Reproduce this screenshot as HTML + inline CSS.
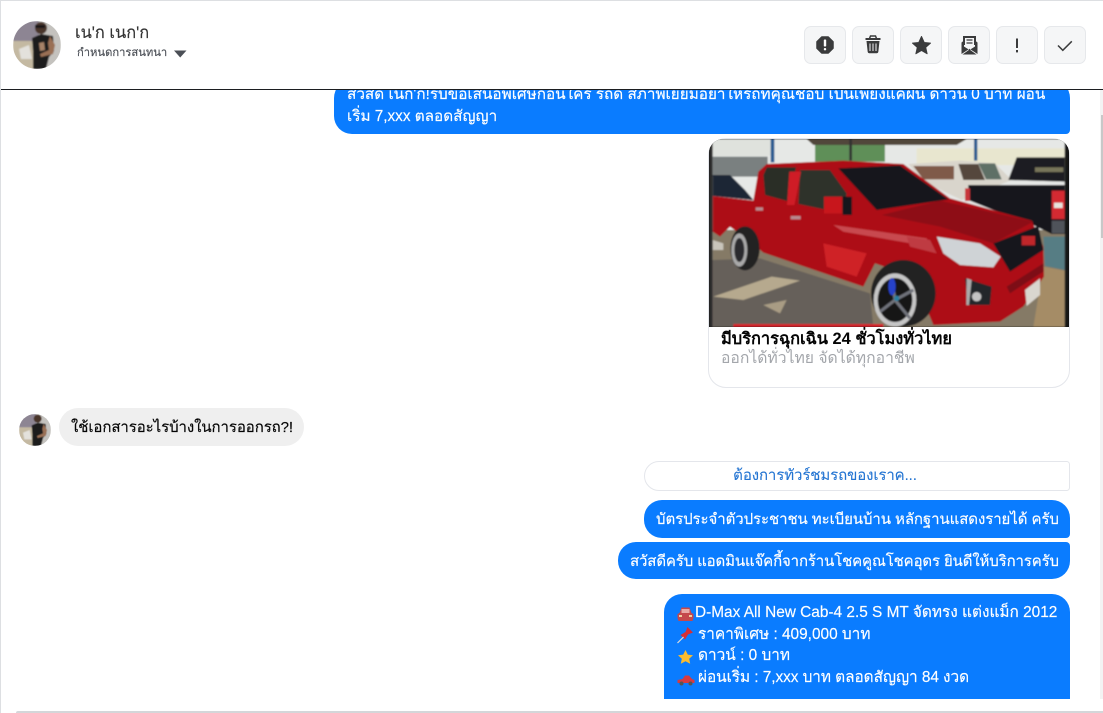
<!DOCTYPE html>
<html lang="th"><head><meta charset="utf-8"><title>Chat</title>
<style>
html,body{margin:0;padding:0;background:#fff}
body{width:1103px;height:713px;position:relative;overflow:hidden;font-family:"Liberation Sans","Noto Sans CJK SC",sans-serif;color:#050505}
.a{position:absolute}
.b{position:absolute;background:#0a7cff;color:#fff;font-size:15px;line-height:21px;white-space:nowrap;box-sizing:border-box;-webkit-text-stroke:.15px currentColor}
.btn{position:absolute;top:26px;width:42px;height:38px;box-sizing:border-box;background:#f5f6f7;border:1px solid #e6e8eb;border-radius:7px}
.btn svg{position:absolute;left:0;top:0}
</style></head><body>
<div class="a" style="left:0;top:0;width:1103px;height:1px;background:#dddfe2"></div>
<svg class="a" style="left:13px;top:21px" width="48" height="48" viewBox="0 0 48 48"><defs><clipPath id="c1"><circle cx="24" cy="24" r="24"/></clipPath><filter id="fa"><feGaussianBlur stdDeviation=".7"/></filter></defs><g clip-path="url(#c1)"><g filter="url(#fa)"><rect width="48" height="48" fill="#b9b6b2"/><rect width="26" height="20" fill="#8d8593"/><rect x="26" width="22" height="48" fill="#c4c2be"/><path d="M0 20H20L22 48H0Z" fill="#c4b9a2"/><path d="M6 28l10-4 3 14H8z" fill="#e3e1dc"/><path d="M19 17 L28 13 L40 15 L41 30 L36 36 L33 48 L20 48 L20 30 Z" fill="#1d1c1e"/><circle cx="28" cy="7" r="6" fill="#4a3429"/><rect x="22" y="4" width="10" height="3" fill="#141414"/><path d="M37 15l5 9-2 9-12 3-1-3 9-4-1-7z" fill="#9a7054"/><path d="M26 22l5-1 1 8-5 1z" fill="#a68268"/></g></g></svg>
<div class="a" style="left:75px;top:23px;font-size:16.400px;line-height:20px;color:#333;-webkit-text-stroke:.15px #333">เน'ก เนก'ก</div>
<div class="a" style="left:77px;top:46px;font-size:11.200px;line-height:15px;color:#4b4f56;-webkit-text-stroke:.15px #4b4f56">กำหนดการสนทนา</div>
<svg class="a" style="left:174px;top:50px" width="13" height="8"><path d="M0 .5 H12.500 L6.200 7.500 Z" fill="#4b4f56"/></svg>

<div class="btn" style="left:804px"><svg width="40" height="36"><path d="M16.800 10h6.400l4.800 4.800v6.400L23.200 26h-6.400L12 21.200v-6.400z" fill="#3a3b3c" stroke="#3a3b3c" stroke-linejoin="round" stroke-width="1.500"/><rect x="18.800" y="12.500" width="2.400" height="7" rx=".8" fill="#fff"/><rect x="18.800" y="21" width="2.400" height="2.400" rx="1" fill="#fff"/></svg></div>
<div class="btn" style="left:852px"><svg width="40" height="36"><path d="M12.500 12h15" stroke="#3a3b3c" stroke-width="2"/><path d="M16.500 11.500l1-2.500h5l1 2.500" stroke="#3a3b3c" stroke-width="1.500" fill="none"/><path d="M13.500 14h13l-1.200 11a1.500 1.500 0 0 1-1.500 1.200h-7.600a1.500 1.500 0 0 1-1.500-1.200z" fill="#3a3b3c"/><path d="M17 16.500v7.500M20 16.500v7.500M23 16.500v7.500" stroke="#f5f6f7" stroke-width="1"/></svg></div>
<div class="btn" style="left:900px"><svg width="40" height="36"><path d="M20.500 9.500l2.700 6 6.300.6-4.800 4.300 1.400 6.300-5.600-3.300-5.600 3.300 1.400-6.300-4.800-4.300 6.300-.6z" fill="#3a3b3c" stroke="#3a3b3c" stroke-linejoin="round"/></svg></div>
<div class="btn" style="left:948px"><svg width="40" height="36"><path d="M15 18V10h11v8" fill="#f5f6f7" stroke="#3a3b3c" stroke-width="2"/><path d="M17.500 13h6M17.500 16h6" stroke="#3a3b3c" stroke-width="1.300"/><path d="M12.500 15.500l2.500-2v6l5.500 3.500 5.500-3.500v-6l2.500 2V27L20.500 21.800 12.500 27zM13.500 27.500h14l-7-5z" fill="#3a3b3c"/></svg></div>
<div class="btn" style="left:996px"><svg width="40" height="36"><rect x="19" y="11.500" width="2" height="9.500" fill="#3a3b3c"/><rect x="19" y="23" width="2" height="2.400" fill="#3a3b3c"/></svg></div>
<div class="btn" style="left:1044px"><svg width="40" height="36"><path d="M13 18.500l4.800 4.800 9-9" fill="none" stroke="#3a3b3c" stroke-width="1.500"/></svg></div>

<div class="a" style="left:0;top:89px;width:1103px;height:1px;background:#1c1e21;z-index:3"></div>

<div class="a" style="left:1100px;top:90px;width:3px;height:609px;background:#f3f3f3"></div>
<div class="a" style="left:1101px;top:115px;width:2px;height:123px;background:#c8c8c8"></div>

<div class="a" style="left:334px;top:90px;width:736px;height:44px;overflow:hidden">
 <div class="b" style="left:0;top:-10px;width:736px;height:54px;border-radius:18px 18px 4px 18px;padding:4px 13px 0;font-size:15.300px;line-height:22px">สวัสดี เนก'ก!รับข้อเสนอพิเศษก่อนใคร รถดี สภาพเยี่ยมอย่าให้รถที่คุณชอบ เป็นเพียงแค่ฝัน ดาวน์ 0 บาท ผ่อน<br>เริ่ม 7,xxx ตลอดสัญญา</div>
</div>

<div class="a" style="left:708px;top:138px;width:362px;height:250px;box-sizing:border-box;border:1px solid #e4e6eb;border-radius:18px;overflow:hidden;background:#fff"></div>
<div class="a" style="left:709px;top:139px;width:360px;height:188px;overflow:hidden;border-radius:14px 14px 0 0;background:#111">
<svg width="360" height="188" viewBox="27 27 1080 564" style="display:block">
<defs><filter id="bl" x="0" y="0" width="1" height="1"><feGaussianBlur stdDeviation="2.500"/></filter></defs>
<g filter="url(#bl)">
<rect x="27" y="27" width="1080" height="564" fill="#e6e8e6"/>
<rect x="38" y="27" width="175" height="50" fill="#dfe2dd"/>
<rect x="345" y="40" width="210" height="55" fill="#5f8f58"/>
<rect x="650" y="55" width="444" height="50" fill="#e8e6cf"/>
<path d="M320 27H800L770 45H340Z" fill="#51473a"/>
<path d="M212 27h11v70h-11zM822 27h10v65h-10z" fill="#2a5c91"/>
<rect x="448" y="27" width="8" height="65" fill="#333"/>
<rect x="38" y="80" width="165" height="60" fill="#7a8080"/>
<path d="M38 300H1094V591H38Z" fill="#857a66"/>
<path d="M38 390 L180 385 L510 490 L520 591 H38Z" fill="#66605a"/>
<path d="M40 500 L215 440 L300 452 L130 510Z" fill="#b6a98e"/>
<path d="M190 525 L260 510 L240 550Z" fill="#a99c84"/>
<path d="M1030 410L1094 422V591H1000Z" fill="#a58c66"/>
<path d="M1030 320H1094V420L1035 408Z" fill="#577d84"/>
<path d="M38 330L70 340V360H38Z" fill="#c9c5bb"/>
<path d="M625 102L780 92 885 100 935 150 785 210 670 155Z" fill="#d9d5cc"/>
<path d="M640 108H762V148H670Z" fill="#7f5a4a"/>
<path d="M775 102H835L855 150H790Z" fill="#54463e"/>
<path d="M835 100H885L905 148H858Z" fill="#5f7066"/>
<path d="M925 150 950 82H1094V155Z" fill="#1d1f22"/>
<rect x="1005" y="112" width="85" height="14" fill="#77745a"/>
<path d="M805 165H1094V312H1055L1000 285 880 240 805 210Z" fill="#15161a"/>
<rect x="795" y="175" width="15" height="38" fill="#c8343a"/>
<rect x="1055" y="182" width="40" height="85" fill="#d42a30"/>
<rect x="1062" y="218" width="26" height="16" fill="#e8e4de"/>
<rect x="1055" y="272" width="40" height="38" fill="#50525a"/>
<path d="M38 135L90 135 135 180 160 210 38 198Z" fill="#1a2636"/>
<path d="M38 198 160 212 175 125 200 102 430 92 610 102 750 205 995 272 1030 350 1032 440 970 530 900 575 700 585 640 440 525 400 490 470 190 368 145 330 90 290 60 320 38 305Z" fill="#ad0d18"/>
<path d="M415 115L600 106 745 208 530 240Z" fill="#14161a"/>
<path d="M190 135 200 112H288L268 215 195 195Z" fill="#2b2e27"/>
<path d="M300 120H390L440 190 430 250 295 222Z" fill="#2d312c"/>
<path d="M268 125h35l-20 100h-22z" fill="#cf1e28"/>
<path d="M545 255L720 212 1000 275 880 340 720 290Z" fill="#8e0b15"/>
<path d="M372 200h55v50h-55z" fill="#c8141d"/>
<path d="M428 200h28v55h-28z" fill="#17181b"/>
<path d="M400 285L540 305 680 325 690 350 430 305Z" fill="#c84a50"/>
<path d="M620 320l70 10 20 40-80-20z" fill="#bf3a42"/>
<path d="M370 340 500 370 470 440 380 410Z" fill="#cf2028"/>
<path d="M272 258h30v10h-30zM167 232h22v10h-22z" fill="#b88a90"/>
<path d="M710 320 840 340 902 380 880 412 780 405 730 370Z" fill="#cfd3d6"/>
<path d="M880 340 1015 288 1030 360 930 425Z" fill="#15161b"/>
<rect x="965" y="318" width="40" height="28" fill="#c0252c"/>
<path d="M795 445 875 470 870 525 805 525Z" fill="#24252a"/><circle cx="830" cy="500" r="14" fill="#c4c4c4"/>
<path d="M800 445l15 5-8 75-8 0z" fill="#aaa"/>
<path d="M920 470 1030 400v25L930 490z" fill="#7d1018"/>
<path d="M975 480 1020 445 1020 495 980 528Z" fill="#d9d6cf"/>
<ellipse cx="610" cy="490" rx="97" ry="100" fill="#242122"/><ellipse cx="585" cy="510" rx="64" ry="80" fill="#c6c6c6"/><ellipse cx="585" cy="510" rx="52" ry="66" fill="#141417"/><path d="M585 510L575 445M585 510L640 480M585 510L630 565M585 510L540 545" stroke="#70727a" stroke-width="9"/><ellipse cx="576" cy="470" rx="11" ry="26" fill="#2742c9"/><circle cx="590" cy="505" r="8" fill="#2a80a0"/>
<ellipse cx="135" cy="355" rx="44" ry="66" fill="#232122"/><ellipse cx="118" cy="360" rx="24" ry="50" fill="#a9a9a9"/><ellipse cx="118" cy="360" rx="15" ry="36" fill="#2a2a2d"/>
<path d="M100 582h450v9H100z" fill="#d6232b"/>
<rect x="27" y="27" width="11" height="564" fill="#2a2a2a"/><rect x="1094" y="27" width="13" height="564" fill="#151515"/>
</g>
</svg></div>
<div class="a" style="left:721px;top:329px;font-size:16.400px;line-height:20px;font-weight:700;color:#050505;white-space:nowrap">มีบริการฉุกเฉิน 24 ชั่วโมงทั่วไทย</div>
<div class="a" style="left:721px;top:349px;font-size:15.700px;line-height:20px;color:#a3a6ab;white-space:nowrap">ออกได้ทั่วไทย จัดได้ทุกอาชีพ</div>

<svg class="a" style="left:19px;top:414px" width="32" height="32" viewBox="0 0 48 48"><defs><clipPath id="c2"><circle cx="24" cy="24" r="24"/></clipPath></defs><g clip-path="url(#c2)"><g filter="url(#fa)"><rect width="48" height="48" fill="#b9b6b2"/><rect width="26" height="20" fill="#8d8593"/><rect x="26" width="22" height="48" fill="#c4c2be"/><path d="M0 20H20L22 48H0Z" fill="#c4b9a2"/><path d="M6 28l10-4 3 14H8z" fill="#e3e1dc"/><path d="M19 17 L28 13 L40 15 L41 30 L36 36 L33 48 L20 48 L20 30 Z" fill="#1d1c1e"/><circle cx="28" cy="7" r="6" fill="#4a3429"/><path d="M37 15l5 9-2 9-12 3-1-3 9-4-1-7z" fill="#9a7054"/></g></g></svg>
<div class="b" style="left:59px;top:408px;width:245px;height:38px;border-radius:19px;background:#efefef;color:#050505;padding:9px 12px 0;letter-spacing:-.08px">ใช้เอกสารอะไรบ้างในการออกรถ?!</div>

<div class="a" style="left:644px;top:461px;width:426px;height:30px;box-sizing:border-box;border:1px solid #e4e6eb;border-radius:18px 4px 4px 18px;background:#fff;color:#2374d2;font-size:15px;line-height:27px;text-align:center;padding-right:64px;white-space:nowrap;letter-spacing:-.1px;-webkit-text-stroke:.1px #2374d2">ต้องการทัวร์ชมรถของเราค...</div>
<div class="b" style="left:644px;top:500px;width:426px;height:38px;border-radius:18px 18px 4px 18px;padding:9px 12px 0;text-align:right;letter-spacing:-.08px">บัตรประจำตัวประชาชน ทะเบียนบ้าน หลักฐานแสดงรายได้ ครับ</div>
<div class="b" style="left:618px;top:542px;width:452px;height:37px;border-radius:18px 4px 18px 18px;padding:9px 12px 0;text-align:right;letter-spacing:-.14px">สวัสดีครับ แอดมินแจ๊คกี้จากร้านโชคคูณโชคอุดร ยินดีให้บริการครับ</div>
<div class="b" style="left:664px;top:594px;width:406px;height:105px;border-radius:18px 18px 0 0;padding:8px 0 0 31px;font-size:15.400px;line-height:21.700px">D-Max All New Cab-4 2.5 S MT จัดทรง แต่งแม็ก 2012<br><span style="margin-left:3px"></span>ราคาพิเศษ : 409,000 บาท<br><span style="margin-left:3px"></span>ดาวน์ : 0 บาท<br><span style="margin-left:3px"></span><span style="letter-spacing:-.06px">ผ่อนเริ่ม : 7,xxx บาท ตลอดสัญญา 84 งวด</span></div>
<svg class="a" style="left:676px;top:604px" width="20" height="88">
<path d="M1.500 14v-4l2-1 2-5.500h8L15.500 9l2 1v4l-1 3h-14z" fill="#c5484c"/><rect x="5.500" y="5" width="8" height="4" fill="#e8a9a6"/><rect x="3" y="11" width="3" height="2" fill="#f0d0a0"/><rect x="13" y="11" width="3" height="2" fill="#f0d0a0"/>
<path d="M4.500 31l5-3 2-5 5.500 5.500-5 2-3 5z" fill="#d62f36"/><path d="M1.500 39l6-6" stroke="#ddd" stroke-width="1.200"/>
<path d="M9.500 46l2.300 4.600 5.200.6-3.800 3.500 1 5-4.700-2.500-4.700 2.500 1-5L2 51.200l5.200-.6z" fill="#fbbc30"/>
<path d="M1.500 79v-3l5-1 2.500-3.500h4L16 75l2.500 1v3z" fill="#d93a40"/><circle cx="5.500" cy="79.500" r="2" fill="#555"/><circle cx="14.500" cy="79.500" r="2" fill="#555"/>
</svg>

<div class="a" style="left:1px;top:699px;width:1102px;height:14px;background:#fff"></div>
<div class="a" style="left:0;top:0;width:1px;height:713px;background:#dddfe2;z-index:4"></div>
<div class="a" style="left:16px;top:711px;width:1087px;height:2px;background:#d4d6d9;border-top-left-radius:3px"></div>
</body></html>
